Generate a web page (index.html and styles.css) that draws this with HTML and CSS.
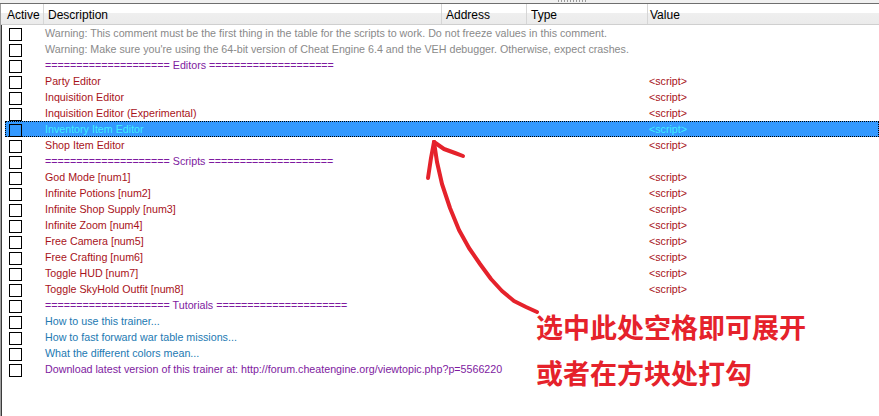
FILE: index.html
```html
<!DOCTYPE html>
<html lang="en">
  <head>
    <meta charset="UTF-8" />
    <title>Cheat Table</title>
    <link rel="stylesheet" href="styles.css">
  </head>
  <body>
    <div class="window">
      <div class="topbar"><span class="grip"></span></div>

      <div class="table">
        <div class="head">
          <div class="col active">Active</div>
          <div class="col">Description</div>
          <div class="col">Address</div>
          <div class="col">Type</div>
          <div class="col last">Value</div>
        </div>

        <div class="rows">
          <div class="row gray"><span class="box"></span><span class="desc">Warning: This comment must be the first thing in the table for the scripts to work. Do not freeze values in this comment.</span><span></span><span></span><span></span></div>
          <div class="row gray"><span class="box"></span><span class="desc">Warning: Make sure you're using the 64-bit version of Cheat Engine 6.4 and the VEH debugger. Otherwise, expect crashes.</span><span></span><span></span><span></span></div>
          <div class="row purple"><span class="box"></span><span class="desc">==================== Editors ====================</span><span></span><span></span><span></span></div>
          <div class="row red"><span class="box"></span><span class="desc">Party Editor</span><span></span><span></span><span class="val">&lt;script&gt;</span></div>
          <div class="row red"><span class="box"></span><span class="desc">Inquisition Editor</span><span></span><span></span><span class="val">&lt;script&gt;</span></div>
          <div class="row red"><span class="box"></span><span class="desc">Inquisition Editor (Experimental)</span><span></span><span></span><span class="val">&lt;script&gt;</span></div>
          <div class="row red selected"><span class="box"></span><span class="desc">Inventory Item Editor</span><span></span><span></span><span class="val">&lt;script&gt;</span></div>
          <div class="row red"><span class="box"></span><span class="desc">Shop Item Editor</span><span></span><span></span><span class="val">&lt;script&gt;</span></div>
          <div class="row purple"><span class="box"></span><span class="desc">==================== Scripts ====================</span><span></span><span></span><span></span></div>
          <div class="row red"><span class="box"></span><span class="desc">God Mode [num1]</span><span></span><span></span><span class="val">&lt;script&gt;</span></div>
          <div class="row red"><span class="box"></span><span class="desc">Infinite Potions [num2]</span><span></span><span></span><span class="val">&lt;script&gt;</span></div>
          <div class="row red"><span class="box"></span><span class="desc">Infinite Shop Supply [num3]</span><span></span><span></span><span class="val">&lt;script&gt;</span></div>
          <div class="row red"><span class="box"></span><span class="desc">Infinite Zoom [num4]</span><span></span><span></span><span class="val">&lt;script&gt;</span></div>
          <div class="row red"><span class="box"></span><span class="desc">Free Camera [num5]</span><span></span><span></span><span class="val">&lt;script&gt;</span></div>
          <div class="row red"><span class="box"></span><span class="desc">Free Crafting [num6]</span><span></span><span></span><span class="val">&lt;script&gt;</span></div>
          <div class="row red"><span class="box"></span><span class="desc">Toggle HUD [num7]</span><span></span><span></span><span class="val">&lt;script&gt;</span></div>
          <div class="row red"><span class="box"></span><span class="desc">Toggle SkyHold Outfit [num8]</span><span></span><span></span><span class="val">&lt;script&gt;</span></div>
          <div class="row purple"><span class="box"></span><span class="desc">==================== Tutorials =====================</span><span></span><span></span><span></span></div>
          <div class="row blue"><span class="box"></span><span class="desc">How to use this trainer...</span><span></span><span></span><span></span></div>
          <div class="row blue"><span class="box"></span><span class="desc">How to fast forward war table missions...</span><span></span><span></span><span></span></div>
          <div class="row blue"><span class="box"></span><span class="desc">What the different colors mean...</span><span></span><span></span><span></span></div>
          <div class="row purple"><span class="box"></span><span class="desc">Download latest version of this trainer at: http://forum.cheatengine.org/viewtopic.php?p=5566220</span><span></span><span></span><span></span></div>
        </div>
      </div>

      <!-- hand drawn annotation on top of the table -->
      <svg class="arrow" width="879" height="416" viewBox="0 0 879 416">
        <path d="M537 312 L526 307 L514 301 L502 291 L491 279 L480 264 L469 248 L459 230 L450 208 L442 184 L437 162 L434 142" />
        <path d="M434 142 L431 158 L428 178" />
        <path d="M434 142 L444 149 L455 153 L463 156" />
      </svg>
      <div class="note">
        <div>选中此处空格即可展开</div>
        <div>或者在方块处打勾</div>
      </div>
    </div>
  </body>
</html>
```

FILE: styles.css
```css
html,
body {
  margin: 0;
  padding: 0;
  background: #ffffff;
  font-family: "Liberation Sans", Arial, sans-serif;
}

.window {
  position: relative;
  width: 879px;
  height: 416px;
  overflow: hidden;
  background: #ffffff;
}

.topbar {
  height: 3px;
  background: #f0f0f0;
  border-bottom: 1px solid #6e6e6e;
  position: relative;
}

.grip {
  position: absolute;
  left: 558px;
  top: 0;
  width: 28px;
  height: 2px;
  background: repeating-linear-gradient(90deg, #9a9a9a 0 1px, transparent 1px 3px);
}

.table {
  height: 412px;
  border-left: 1px solid #a0a0a0;
  box-shadow: inset 1px 0 0 #3a3a3a;
}

.head {
  display: grid;
  grid-template-columns: 43px 398px 85px 121px 1fr;
  height: 20px;
  border-bottom: 1px solid #cfcfcf;
  background: linear-gradient(#ffffff 0, #ffffff 45%, #efefef 45%, #ebebeb 100%);
  font-size: 12px;
  color: #000;
}

.head .col {
  padding: 4px 0 0 4px;
  border-right: 1px solid #d6d6d6;
  white-space: nowrap;
}

.head .col.active {
  padding-left: 6px;
}

.head .col.last {
  padding-left: 2px;
  border-right: none;
}

.row {
  display: grid;
  grid-template-columns: 38px 398px 85px 121px 1fr;
  height: 16px;
  margin-left: 4px;
  line-height: 16px;
  font-size: 10.7px;
  white-space: nowrap;
}

.row .desc,
.row .val {
  padding-left: 2px;
}

.box {
  width: 11px;
  height: 11px;
  margin: 3px 0 0 4px;
  border: 1px solid #000;
  background: #fff;
}

.gray { color: #8a8a8a; }
.purple { color: #7e1aa0; }
.red { color: #a8121a; }
.blue { color: #2279b2; }

.selected {
  background: #3399ff;
  color: #40eeff;
  outline: 1px dotted #000;
  outline-offset: -1px;
}

.selected .box {
  background: #3399ff;
}

.arrow {
  position: absolute;
  left: 0;
  top: 0;
  pointer-events: none;
}

.arrow path {
  fill: none;
  stroke: #e5222b;
  stroke-width: 4;
  stroke-linecap: round;
  stroke-linejoin: round;
}

.note {
  position: absolute;
  left: 536px;
  top: 304px;
  font-family: "Noto Sans CJK SC", sans-serif;
  font-size: 27px;
  font-weight: 700;
  line-height: 46px;
  color: #e5222b;
}
```
